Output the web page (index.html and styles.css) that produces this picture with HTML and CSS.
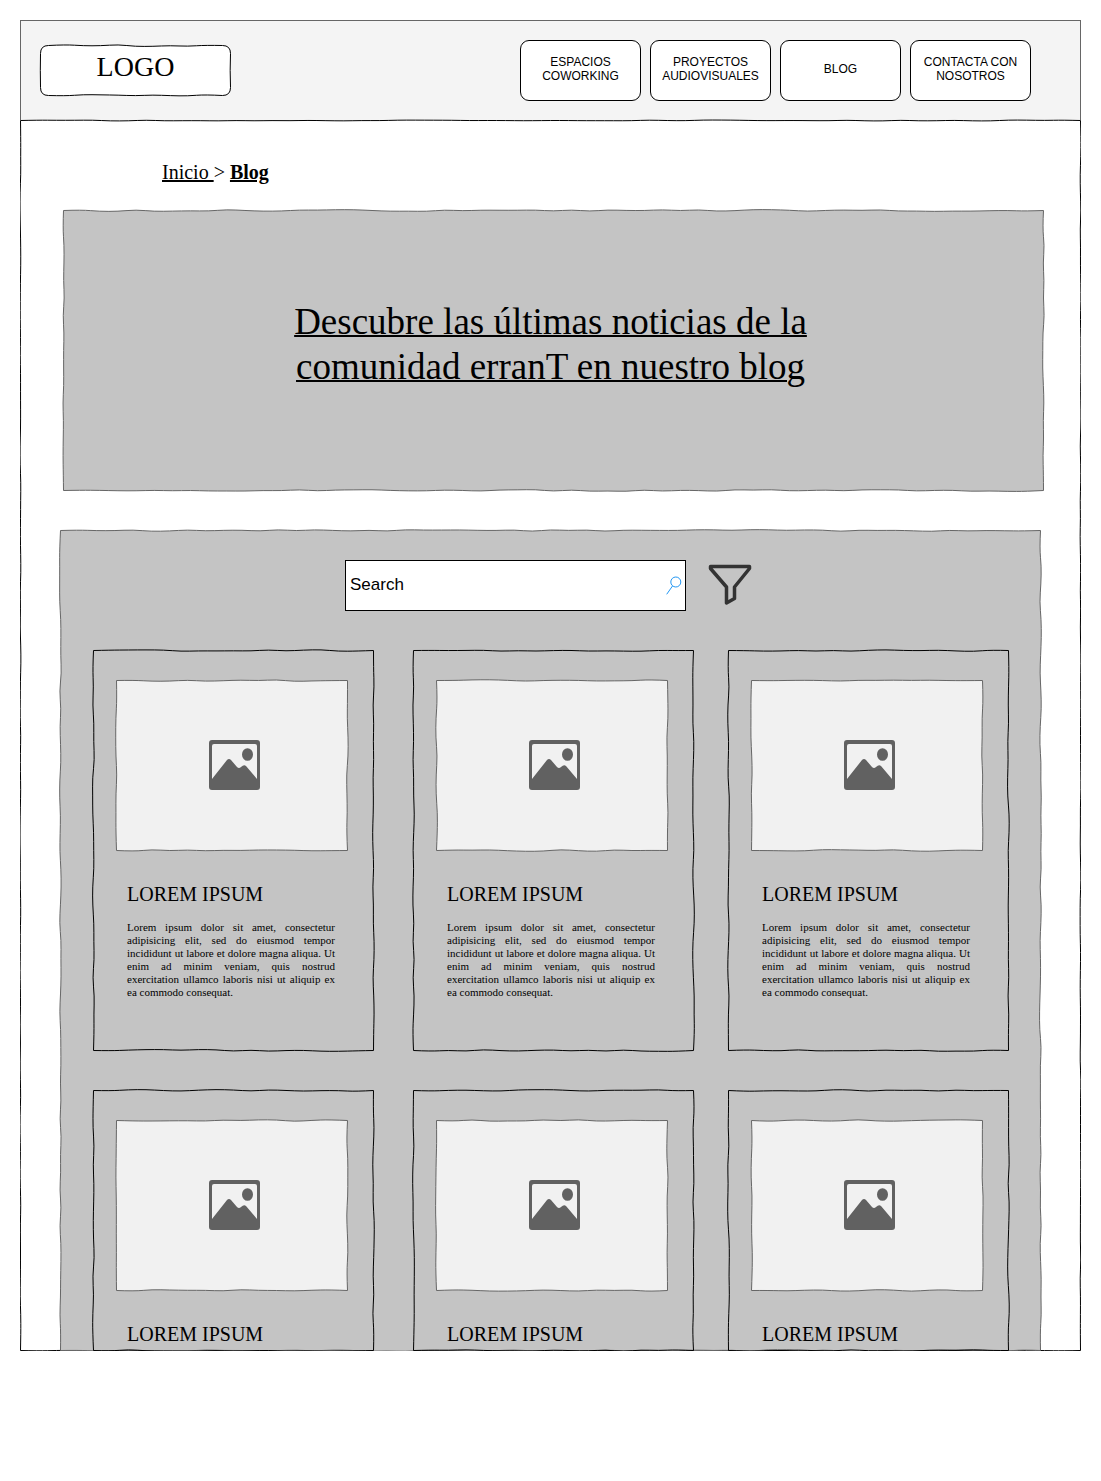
FILE: index.html
```html
<!DOCTYPE html>
<html lang="es">
<head>
<meta charset="utf-8">
<meta name="viewport" content="width=device-width, initial-scale=1">
<title>Blog</title>
<link rel="stylesheet" href="styles.css">
</head>
<body>
<svg class="symbols" aria-hidden="true">
  <symbol id="picture" viewBox="0 0 51 50">
    <path fill-rule="evenodd" d="M3 0H48Q51 0 51 3V47Q51 50 48 50H3Q0 50 0 47V3Q0 0 3 0ZM5 4Q3 4 3 6V39L18 20Q20 18 22 20L28 27Q30 29 32 27Q35 24 37 26L48 39V6Q48 4 46 4Z"/>
    <ellipse cx="38.500" cy="14.500" rx="5.500" ry="6.300"/>
  </symbol>
</svg>

<header class="header">
  <a class="logo sketch" data-radius="8" href="#">LOGO</a>
  <nav class="nav">
    <a class="nav-link" href="#">ESPACIOS COWORKING</a>
    <a class="nav-link" href="#">PROYECTOS AUDIOVISUALES</a>
    <a class="nav-link" href="#">BLOG</a>
    <a class="nav-link" href="#">CONTACTA CON NOSOTROS</a>
  </nav>
</header>

<main class="page sketch" data-wave="1">
  <p class="breadcrumb"><a href="#">Inicio&nbsp;</a>&gt; <a class="current" href="#">Blog</a></p>

  <section class="hero sketch">
    <h1 class="hero-title">Descubre las últimas noticias de la comunidad erranT en nuestro blog</h1>
  </section>

  <section class="panel sketch">
    <form class="search">
      <label class="search-box">
        <input class="search-input" type="search" placeholder="Search" aria-label="Search">
        <svg class="search-icon" viewBox="0 0 16 19" aria-hidden="true"><circle cx="9.800" cy="6" r="5"/><path d="M6.500 10L.700 18.300"/></svg>
      </label>
      <button class="filter" type="button" aria-label="Filtrar">
        <svg viewBox="0 0 42 40" aria-hidden="true"><path d="M1.500 1.500H40.500V3.500L25.500 22V33.500L17.500 38V22L1.500 3.500Z"/></svg>
      </button>
    </form>

    <div class="cards">
      <article class="card sketch">
        <div class="thumb sketch"><svg><use href="#picture"/></svg></div>
        <h2>LOREM IPSUM</h2>
        <p>Lorem ipsum dolor sit amet, consectetur adipisicing elit, sed do eiusmod tempor incididunt ut labore et dolore magna aliqua. Ut enim ad minim veniam, quis nostrud exercitation ullamco laboris nisi ut aliquip ex ea commodo consequat.</p>
      </article>
      <article class="card sketch">
        <div class="thumb sketch"><svg><use href="#picture"/></svg></div>
        <h2>LOREM IPSUM</h2>
        <p>Lorem ipsum dolor sit amet, consectetur adipisicing elit, sed do eiusmod tempor incididunt ut labore et dolore magna aliqua. Ut enim ad minim veniam, quis nostrud exercitation ullamco laboris nisi ut aliquip ex ea commodo consequat.</p>
      </article>
      <article class="card sketch">
        <div class="thumb sketch"><svg><use href="#picture"/></svg></div>
        <h2>LOREM IPSUM</h2>
        <p>Lorem ipsum dolor sit amet, consectetur adipisicing elit, sed do eiusmod tempor incididunt ut labore et dolore magna aliqua. Ut enim ad minim veniam, quis nostrud exercitation ullamco laboris nisi ut aliquip ex ea commodo consequat.</p>
      </article>
      <article class="card card-short sketch">
        <div class="thumb sketch"><svg><use href="#picture"/></svg></div>
        <h2>LOREM IPSUM</h2>
      </article>
      <article class="card card-short sketch">
        <div class="thumb sketch"><svg><use href="#picture"/></svg></div>
        <h2>LOREM IPSUM</h2>
      </article>
      <article class="card card-short sketch">
        <div class="thumb sketch"><svg><use href="#picture"/></svg></div>
        <h2>LOREM IPSUM</h2>
      </article>
    </div>
  </section>
</main>
<script src="sketch.js"></script>
</body>
</html>
```

FILE: styles.css
```css
* {
  box-sizing: border-box;
}

body {
  margin: 20px;
  background: #fff;
  color: #000;
  font-family: "Liberation Serif", "Times New Roman", serif;
  font-size: 20px;
  line-height: 24px;
}

a {
  color: inherit;
}

h1, h2, p {
  margin: 0;
  font-weight: normal;
}

.symbols {
  display: none;
}

/* Hand-drawn outline, filled in by sketch.js */
.sketch {
  position: relative;
  isolation: isolate;
}

/* Reaches 2px past the box so that the waves are not cut off */
.outline {
  position: absolute;
  inset: -2px;
  z-index: -1;
  width: calc(100% + 4px);
  height: calc(100% + 4px);
  fill: var(--fill, none);
  stroke: var(--stroke, #000);
  stroke-width: 1;
  pointer-events: none;
}

/* Header */
.header {
  display: flex;
  flex-wrap: wrap;
  align-items: center;
  justify-content: space-between;
  gap: 12px;
  min-height: 100px;
  padding: 0 49px 0 19px;
  background: #f4f4f4;
  border: 1px solid #666;
  border-bottom: 0;
}

.logo {
  --fill: #fff;
  width: 191px;
  padding: 6px 0 13px;
  font-size: 28px;
  line-height: 32px;
  text-align: center;
  text-decoration: none;
}

.nav {
  display: flex;
  flex-wrap: wrap;
  gap: 9px;
}

.nav-link {
  display: flex;
  align-items: center;
  justify-content: center;
  width: 121px;
  height: 61px;
  padding: 0 8px 3px;
  background: #fff;
  border: 1px solid #000;
  border-radius: 9px;
  font-family: "Liberation Sans", Arial, sans-serif;
  font-size: 12px;
  line-height: 14px;
  text-align: center;
  text-decoration: none;
}

/* Page */
.page {
  padding-top: 40px;
}

.breadcrumb {
  margin-left: 142px;
}

.current {
  font-weight: bold;
}

.hero {
  --fill: #c4c4c4;
  --stroke: #666;
  display: flex;
  align-items: center;
  justify-content: center;
  min-height: 281px;
  margin: 26px 37px 0 43px;
  padding: 0 20px 14px 14px;
}

.hero-title {
  max-width: 560px;
  font-size: 37px;
  line-height: 45px;
  text-align: center;
  text-decoration: underline;
  text-decoration-thickness: 2px;
}

.panel {
  --fill: #c4c4c4;
  --stroke: #666;
  margin: 39px 40px 0;
  padding: 30px 32px 0 33px;
}

.search {
  display: flex;
  align-items: center;
  justify-content: center;
  gap: 23px;
  padding-right: 6px;
}

.search-box {
  display: flex;
  align-items: center;
  width: 341px;
  height: 51px;
  padding: 0 3px 0 4px;
  background: #fff;
  border: 1px solid #000;
}

.search-input {
  flex: 1;
  min-width: 0;
  padding: 0 0 1px;
  border: 0;
  outline: 0;
  background: none;
  color: #000;
  font: 17px "Liberation Sans", Arial, sans-serif;
  appearance: none;
}

.search-input::placeholder {
  color: #000;
  opacity: 1;
}

.search-icon {
  width: 16px;
  height: 19px;
  fill: none;
  stroke: #2196f3;
}

.filter {
  padding: 0 0 2px;
  border: 0;
  background: none;
}

.filter svg {
  display: block;
  width: 42px;
  height: 40px;
  overflow: visible;
  fill: none;
  stroke: #333;
  stroke-width: 3.5;
  stroke-linejoin: round;
}

/* Cards */
.cards {
  display: grid;
  grid-template-columns: 320fr 315fr 281fr;
  row-gap: 39px;
  margin-top: 39px;
}

.card {
  --stroke: #000;
  --fill: none;
  width: 281px;
  min-height: 401px;
  padding: 30px 26px 30px 23px;
}

.card-short {
  min-height: 261px;
  padding-bottom: 5px;
}

.thumb {
  --fill: #f1f1f1;
  --stroke: #666;
  display: flex;
  align-items: center;
  justify-content: center;
  height: 171px;
  padding: 0 0 2px 5px;
}

.thumb > svg:not(.outline) {
  width: 51px;
  height: 50px;
  fill: #616161;
}

.card h2 {
  margin: 31px 0 0 11px;
  font-size: 20px;
}

.card p {
  margin: 15px 13px 0 11px;
  font-size: 11px;
  line-height: 13px;
  text-align: justify;
}

@media (max-width: 1060px) {
  .cards {
    grid-template-columns: repeat(auto-fit, 281px);
    justify-content: center;
    column-gap: 35px;
  }
}
```

FILE: sketch.js
```js
// Draws a slightly wavy, pen-like outline behind every .sketch element.
const NS = "http://www.w3.org/2000/svg";
const BLEED = 2;

function randomFrom(seed) {
  let s = seed;
  return () => {
    s = (s * 16807) % 2147483647;
    return s / 2147483647 - 0.5;
  };
}

// Smooth line from a to b whose inner points drift across its direction.
function edge(ax, ay, bx, by, rand, wave) {
  const length = Math.hypot(bx - ax, by - ay);
  const steps = Math.max(2, Math.round(length / 18));
  const nx = -(by - ay) / length;
  const ny = (bx - ax) / length;
  const points = [];
  for (let i = 1; i < steps; i++) {
    const drift = rand() * wave;
    points.push([
      ax + ((bx - ax) * i) / steps + nx * drift,
      ay + ((by - ay) * i) / steps + ny * drift
    ]);
  }
  let d = "";
  points.forEach(([x, y], i) => {
    const next = points[i + 1];
    const end = next ? [(x + next[0]) / 2, (y + next[1]) / 2] : [bx, by];
    d += `Q${x.toFixed(2)} ${y.toFixed(2)} ${end[0].toFixed(2)} ${end[1].toFixed(2)}`;
  });
  return d;
}

function outline(w, h, r, wave, seed) {
  const rand = randomFrom(seed);
  const l = BLEED + 0.5, t = BLEED + 0.5, x = BLEED + w - 0.5, y = BLEED + h - 0.5;
  return `M${l + r} ${t}` + edge(l + r, t, x - r, t, rand, wave) +
    `Q${x} ${t} ${x} ${t + r}` + edge(x, t + r, x, y - r, rand, wave) +
    `Q${x} ${y} ${x - r} ${y}` + edge(x - r, y, l + r, y, rand, wave) +
    `Q${l} ${y} ${l} ${y - r}` + edge(l, y - r, l, t + r, rand, wave) +
    `Q${l} ${t} ${l + r} ${t}Z`;
}

document.querySelectorAll(".sketch").forEach((element, index) => {
  const svg = document.createElementNS(NS, "svg");
  const path = document.createElementNS(NS, "path");
  svg.setAttribute("class", "outline");
  svg.setAttribute("aria-hidden", "true");
  svg.append(path);
  element.prepend(svg);
  const draw = () => path.setAttribute("d", outline(
    element.offsetWidth, element.offsetHeight,
    Number(element.dataset.radius || 0),
    Number(element.dataset.wave || 2), 7919 * (index + 1)
  ));
  draw();
  new ResizeObserver(draw).observe(element);
});
```
